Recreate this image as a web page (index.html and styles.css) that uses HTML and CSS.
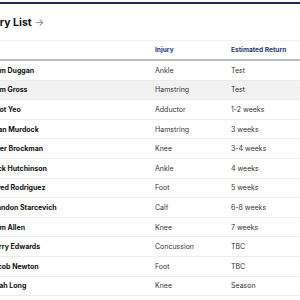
FILE: index.html
```html
<!DOCTYPE html>
<html>
<head>
<meta charset="utf-8">
<link rel="stylesheet" href="styles.css">
</head>
<body>
<div class="card">
  <h2 class="title">Injury List <span class="arrow">&rarr;</span></h2>
  <div class="table">
    <div class="row head"><div></div><div>Injury</div><div>Estimated Return</div></div>
    <div class="row"><div class="name">Liam Duggan</div><div>Ankle</div><div>Test</div></div>
    <div class="row alt"><div class="name">Liam Gross</div><div>Hamstring</div><div>Test</div></div>
    <div class="row"><div class="name">Elliot Yeo</div><div>Adductor</div><div>1-2 weeks</div></div>
    <div class="row"><div class="name">Ryan Murdock</div><div>Hamstring</div><div>3 weeks</div></div>
    <div class="row"><div class="name">Tyler Brockman</div><div>Knee</div><div>3-4 weeks</div></div>
    <div class="row"><div class="name">Jack Hutchinson</div><div>Ankle</div><div>4 weeks</div></div>
    <div class="row"><div class="name">Jared Rodriguez</div><div>Foot</div><div>5 weeks</div></div>
    <div class="row"><div class="name">Brandon Starcevich</div><div>Calf</div><div>6-8 weeks</div></div>
    <div class="row"><div class="name">Liam Allen</div><div>Knee</div><div>7 weeks</div></div>
    <div class="row"><div class="name">Harry Edwards</div><div>Concussion</div><div>TBC</div></div>
    <div class="row"><div class="name">Jacob Newton</div><div>Foot</div><div>TBC</div></div>
    <div class="row"><div class="name">Noah Long</div><div>Knee</div><div>Season</div></div>
  </div>
</div>
</body>
</html>
```
FILE: styles.css
```css
html, body {
  margin: 0;
  padding: 0;
  background: #fff;
  overflow: hidden;
}
body {
  width: 300px;
  height: 300px;
  font-family: Inter, "Liberation Sans", sans-serif;
  color: #222;
}
.card {
  margin-left: -19px;
  width: 360px;
  margin-top: 2px;
  border-top: 2px solid #1b2a5a;
}
.title {
  margin: 0;
  height: 36px;
  box-sizing: border-box;
  padding-top: 12px;
  font-size: 10.5px;
  font-weight: 700;
  color: #111;
  line-height: 13px;
}
.arrow {
  font-weight: 400;
  color: #888;
}
.table {
  border-top: 1px solid #f0f0f0;
}
.row {
  display: grid;
  grid-template-columns: 164px 76px 1fr;
  height: 19.6px;
  box-sizing: border-box;
  border-bottom: 1px solid #ececec;
  align-items: center;
  font-size: 7px;
  color: #333;
}
.row > div {
  padding-left: 10px;
}
.row > div.name {
  padding-left: 8.5px;
}
.row.head {
  height: 20px;
  border-bottom: 2px solid #b7bec7;
  font-weight: 700;
  color: #1d3a78;
  font-size: 6.6px;
}
.row.alt {
  background: #f2f2f2;
}
.name {
  font-weight: 700;
  color: #111;
}
```
